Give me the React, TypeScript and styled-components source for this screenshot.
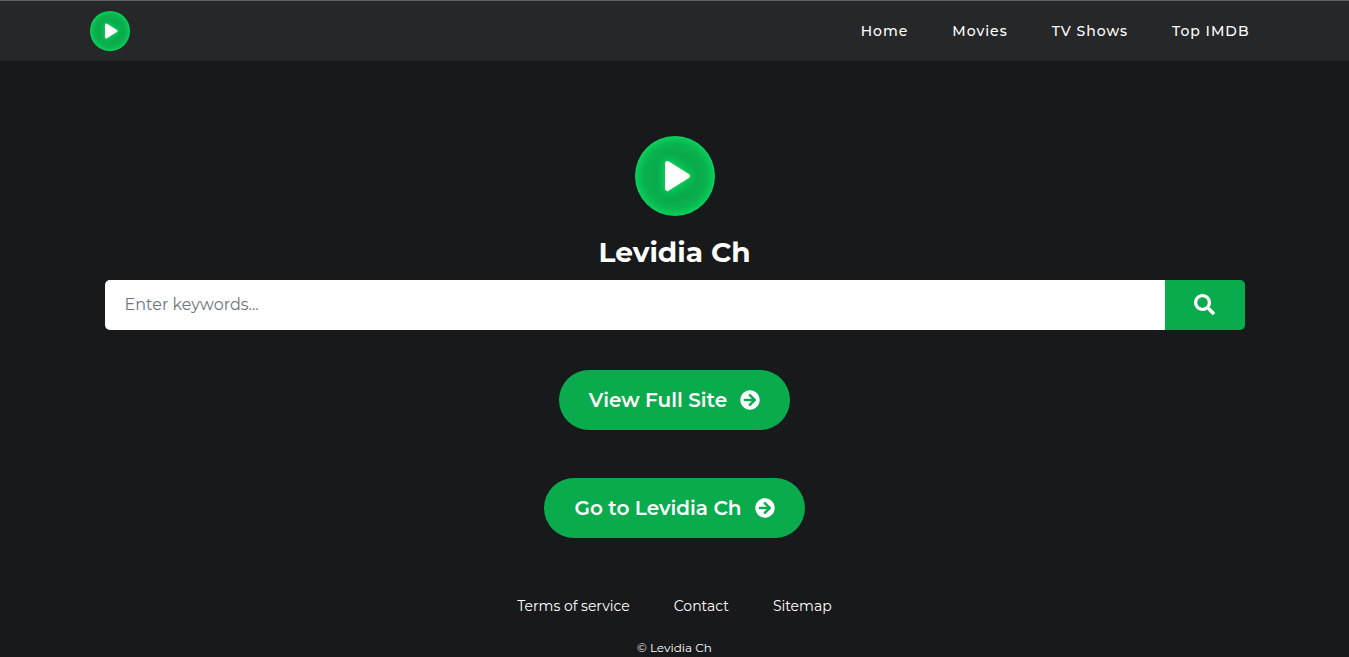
import React, { useId } from "react";
import styled, { createGlobalStyle } from "styled-components";
import { FaArrowCircleRight, FaSearch } from "react-icons/fa";

const GlobalStyle = createGlobalStyle`
  *, *::before, *::after { box-sizing: border-box; }
  body {
    margin: 0;
    background: #18191b;
    color: #fff;
    font-family: Montserrat, Inter, "Liberation Sans", sans-serif;
    font-size: 16px;
  }
  a { color: inherit; text-decoration: none; }
`;

const Header = styled.header`
  background: #262729;
  border-top: 1px solid #606364;
`;

const HeaderInner = styled.div`
  display: flex;
  align-items: center;
  justify-content: space-between;
  max-width: 1170px;
  height: 60px;
  margin: 0 auto;
`;

const LogoLink = styled.a`
  display: block;
  line-height: 0;
`;

const Nav = styled.nav`
  display: flex;
  gap: 44px;
  padding-right: 10px;
`;

const NavLink = styled.a`
  font-size: 14px;
  line-height: 20px;
  font-weight: 500;
  letter-spacing: 1px;
`;

const Main = styled.main`
  display: flex;
  flex-direction: column;
  align-items: center;
  max-width: 1170px;
  margin: 0 auto;
  padding: 75px 15px 0;
`;

const Title = styled.h1`
  margin: 16px 0 8px;
  font-size: 28px;
  line-height: 40px;
  font-weight: 700;
`;

const SearchForm = styled.form`
  display: flex;
  width: 100%;
  height: 50px;
  margin-bottom: 40px;
  border-radius: 5px;
  overflow: hidden;
`;

const SearchInput = styled.input`
  flex: 1;
  min-width: 0;
  padding: 0 20px 2px;
  border: 0;
  outline: 0;
  background: #fff;
  color: #222;
  font-family: inherit;
  font-size: 16px;
  font-weight: 400;
  &::placeholder { color: #6c757d; opacity: 1; }
`;

const SearchButton = styled.button`
  display: flex;
  align-items: center;
  justify-content: center;
  width: 80px;
  padding: 0 0 2px;
  border: 0;
  background: #09ab4c;
  color: #fff;
  font-size: 21px;
  cursor: pointer;
`;

const PillLink = styled.a`
  display: flex;
  align-items: center;
  gap: 13px;
  height: 60px;
  margin-bottom: 48px;
  padding: 0 30px;
  border-radius: 30px;
  background: #09ab4c;
  font-size: 20px;
  line-height: 30px;
  font-weight: 600;
`;

const Footer = styled.footer`
  display: flex;
  flex-direction: column;
  align-items: center;
  padding-top: 10px;
`;

const FooterNav = styled.nav`
  display: flex;
  gap: 44px;
  font-size: 14px;
  line-height: 20px;
`;

const Copyright = styled.p`
  margin: 23px 0 0;
  font-size: 12px;
  line-height: 18px;
`;

function PlayLogo({ size }: { size: number }) {
  const id = useId();
  return (
    <svg width={size} height={size} viewBox="0 0 80 80" role="img" aria-label="Levidia Ch">
      <defs>
        <radialGradient id={`${id}rim`}>
          <stop offset="0.6" stopColor="#09ab4c" />
          <stop offset="0.8" stopColor="#09b34e" />
          <stop offset="0.92" stopColor="#09c455" />
          <stop offset="1" stopColor="#09d45c" />
        </radialGradient>
        <filter id={`${id}glow`} x="-60%" y="-60%" width="220%" height="220%">
          <feGaussianBlur stdDeviation="4" />
        </filter>
      </defs>
      <circle cx="40" cy="40" r="40" fill={`url(#${id}rim)`} />
      <path
        d="M33 28 52 40 33 52Z"
        fill="#09d85c"
        stroke="#09d85c"
        strokeWidth="10"
        strokeLinejoin="round"
        filter={`url(#${id}glow)`}
      />
      <path
        d="M32.5 27.5 52.5 40 32.5 52.5Z"
        fill="#fff"
        stroke="#fff"
        strokeWidth="5"
        strokeLinejoin="round"
      />
    </svg>
  );
}

const navItems = ["Home", "Movies", "TV Shows", "Top IMDB"];
const footerItems = ["Terms of service", "Contact", "Sitemap"];

export default function App() {
  return (
    <>
      <GlobalStyle />
      <Header>
        <HeaderInner>
          <LogoLink href="#">
            <PlayLogo size={40} />
          </LogoLink>
          <Nav aria-label="Main">
            {navItems.map((item) => (
              <NavLink key={item} href="#">{item}</NavLink>
            ))}
          </Nav>
        </HeaderInner>
      </Header>
      <Main>
        <PlayLogo size={80} />
        <Title>Levidia Ch</Title>
        <SearchForm role="search" onSubmit={(e) => e.preventDefault()}>
          <SearchInput type="text" placeholder="Enter keywords..." aria-label="Enter keywords" />
          <SearchButton type="submit" aria-label="Search">
            <FaSearch />
          </SearchButton>
        </SearchForm>
        <PillLink href="#">
          View Full Site <FaArrowCircleRight />
        </PillLink>
        <PillLink href="#">
          Go to Levidia Ch <FaArrowCircleRight />
        </PillLink>
      </Main>
      <Footer>
        <FooterNav aria-label="Footer">
          {footerItems.map((item) => (
            <a key={item} href="#">{item}</a>
          ))}
        </FooterNav>
        <Copyright>© Levidia Ch</Copyright>
      </Footer>
    </>
  );
}
